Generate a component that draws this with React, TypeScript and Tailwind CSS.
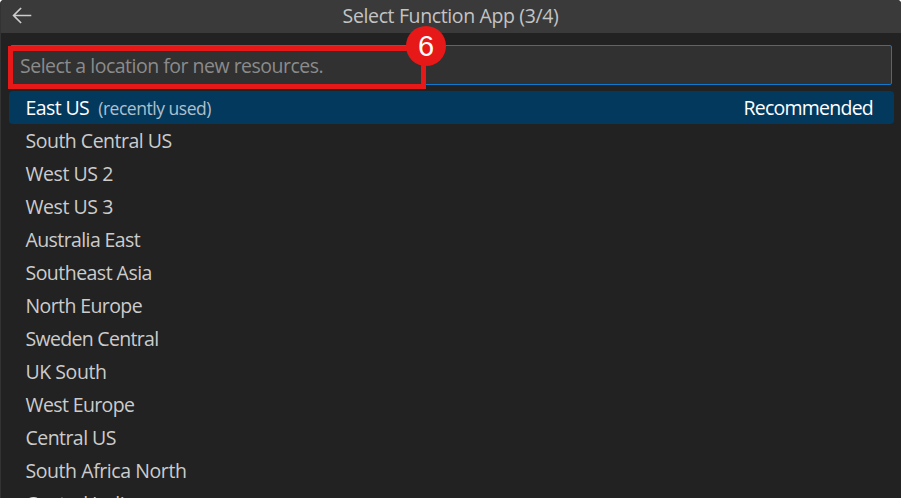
type Location = { name: string; tracking: string; note?: string; badge?: string };

const locations: Location[] = [
  { name: "East US", tracking: "tracking-[-0.6px]", note: "(recently used)", badge: "Recommended" },
  { name: "South Central US", tracking: "tracking-[-0.5px]" },
  { name: "West US 2", tracking: "tracking-[-0.45px]" },
  { name: "West US 3", tracking: "tracking-[-0.45px]" },
  { name: "Australia East", tracking: "tracking-[-0.6px]" },
  { name: "Southeast Asia", tracking: "tracking-[-0.53px]" },
  { name: "North Europe", tracking: "tracking-[-0.6px]" },
  { name: "Sweden Central", tracking: "tracking-[-0.69px]" },
  { name: "UK South", tracking: "tracking-[-0.45px]" },
  { name: "West Europe", tracking: "tracking-[-0.62px]" },
  { name: "Central US", tracking: "tracking-[-0.55px]" },
  { name: "South Africa North", tracking: "tracking-[-0.43px]" },
  { name: "Central India", tracking: "tracking-[-0.55px]" },
];

function TitleBar() {
  return (
    <header className="grid h-[33px] shrink-0 grid-cols-[44px_1fr_45px] items-start bg-[#3a3a3a]">
      <button className="pt-[7px] pl-[11px]" aria-label="Back">
        <svg width="20" height="18" viewBox="0 0 20 18" fill="none" stroke="#cccccc" strokeWidth="1.7">
          <path d="M9.1 1 1.6 8.5l7.5 7.5M1.6 8.5H19.3" />
        </svg>
      </button>
      <h1 className="text-center text-[19.5px] leading-[31px] tracking-[-0.37px] whitespace-nowrap text-[#c4c4c4]">
        Select Function App (3/4)
      </h1>
    </header>
  );
}

function SearchBox() {
  return (
    <div className="relative mt-3 mr-[9px] ml-[9px] h-10 shrink-0 rounded-[2px] border border-[#0f78cf] bg-[#313131] pl-[9px]">
      <span className="block text-[19.5px] leading-[40px] tracking-[-0.5px] whitespace-nowrap text-[#8b8b8b]">
        Select a location for new resources.
      </span>
      <div className="absolute top-0 left-[-3px] h-[43px] w-[418px] border-[5px] border-[#e71818]" />
      <div className="absolute top-[-20px] left-[395px] flex size-10 items-center justify-center rounded-full bg-[#e71818] pt-px font-['Liberation_Sans',sans-serif] text-[29px] leading-none text-white">
        6
      </div>
    </div>
  );
}

function Row({ item, selected }: { item: Location; selected: boolean }) {
  return (
    <li
      className={`flex h-[33px] shrink-0 items-baseline rounded-[4px] pr-[21px] pl-[16.5px] text-[19.5px] leading-[33px] whitespace-nowrap ${
        selected ? "bg-[#04395e] text-white" : "text-[#cccccc]"
      }`}
    >
      <span className={item.tracking}>{item.name}</span>
      {item.note && <span className="ml-[9px] text-[17.5px] tracking-[-0.47px] text-[#b0c0cc]">{item.note}</span>}
      {item.badge && <span className="ml-auto tracking-[-0.76px]">{item.badge}</span>}
    </li>
  );
}

export default function App() {
  return (
    <main className="flex h-[498px] w-[901px] flex-col overflow-hidden rounded-t-[4px] border-l border-[#333333] bg-[#222222] font-['Open_Sans','Noto_Sans',sans-serif]">
      <TitleBar />
      <SearchBox />
      <ul className="mt-[6px] mr-[7px] ml-2 flex flex-col">
        {locations.map((item, i) => (
          <Row key={item.name} item={item} selected={i === 0} />
        ))}
      </ul>
    </main>
  );
}
